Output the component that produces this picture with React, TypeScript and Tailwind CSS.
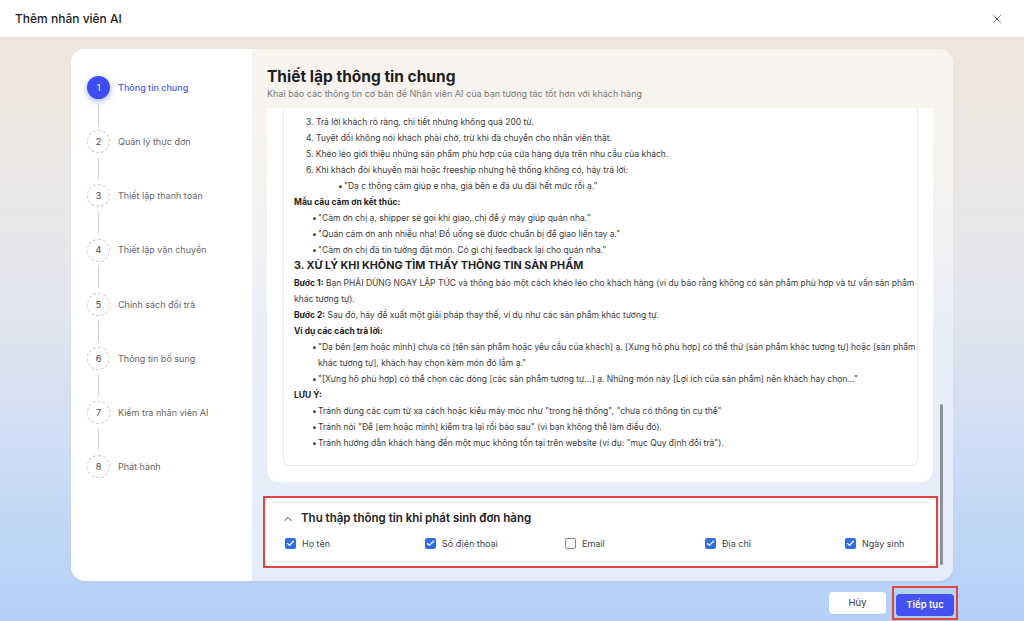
import { Check, ChevronUp, X } from "lucide-react";

const steps = [
  "Thông tin chung",
  "Quản lý thực đơn",
  "Thiết lập thanh toán",
  "Thiết lập vận chuyển",
  "Chính sách đổi trả",
  "Thông tin bổ sung",
  "Kiểm tra nhân viên AI",
  "Phát hành",
];

const fields = [
  { label: "Họ tên", checked: true },
  { label: "Số điện thoại", checked: true },
  { label: "Email", checked: false },
  { label: "Địa chỉ", checked: true },
  { label: "Ngày sinh", checked: true },
];

function Bullet({ children, nested }: { children: React.ReactNode; nested?: boolean }) {
  return (
    <div className={`flex ${nested ? "pl-[44px]" : "pl-[18px]"}`}>
      <span className="w-[6px] shrink-0">•</span>
      <span>{children}</span>
    </div>
  );
}

function Sidebar() {
  return (
    <div className="w-[181px] shrink-0 bg-white pl-[16px] pt-[27px]">
      {steps.map((s, i) => {
        const active = i === 0;
        return (
          <div key={s}>
            <div className="flex items-center gap-[8px]">
              <div
                className={`w-[23px] h-[23px] rounded-full flex items-center justify-center text-[9px] ${
                  active
                    ? "bg-[#3d4cf3] text-white shadow-[0_2px_6px_rgba(61,76,243,0.45)]"
                    : "border border-dashed border-[#cfcfcf] text-[#444] bg-white"
                }`}
              >
                {i + 1}
              </div>
              <span className={`text-[9px] ${active ? "text-[#4a5af0] font-medium" : "text-[#666]"}`}>
                {s}
              </span>
            </div>
            {i < steps.length - 1 && (
              <div className="h-[31.2px] w-[23px] flex justify-center py-[5px]">
                <div className="w-px bg-[#cfcfcf]" />
              </div>
            )}
          </div>
        );
      })}
    </div>
  );
}

function Prompt() {
  return (
    <div className="bg-white rounded-[12px] ml-[4px] mr-[8px] pl-[16px] pr-[15px] pb-[16px]">
      <div className="border border-t-0 border-[#ececec] rounded-b-[6px] pl-[10px] pr-[3px] pt-[24px] pb-[14px] text-[8.5px] leading-[16px] text-[#3a3a3a]">
        <div className="pl-[12px]">3. Trả lời khách rõ ràng, chi tiết nhưng không quá 200 từ.</div>
        <div className="pl-[12px]">4. Tuyệt đối không nói khách phải chờ, trừ khi đã chuyển cho nhân viên thật.</div>
        <div className="pl-[12px]">5. Khéo léo giới thiệu những sản phẩm phù hợp của cửa hàng dựa trên nhu cầu của khách.</div>
        <div className="pl-[12px]">6. Khi khách đòi khuyến mãi hoặc freeship nhưng hệ thống không có, hãy trả lời:</div>
        <Bullet nested>"Dạ c thông cảm giúp e nha, giá bên e đã ưu đãi hết mức rồi ạ."</Bullet>
        <div className="font-bold text-[#222]">Mẫu câu cảm ơn kết thúc:</div>
        <Bullet>"Cảm ơn chị ạ, shipper sẽ gọi khi giao, chị để ý máy giúp quán nha."</Bullet>
        <Bullet>"Quán cảm ơn anh nhiều nha! Đồ uống sẽ được chuẩn bị để giao liền tay ạ."</Bullet>
        <Bullet>"Cảm ơn chị đã tin tưởng đặt món. Có gì chị feedback lại cho quán nha."</Bullet>
        <div className="text-[10.8px] leading-[16px] mb-[1px] font-bold text-[#1f1f1f]">
          3. XỬ LÝ KHI KHÔNG TÌM THẤY THÔNG TIN SẢN PHẨM
        </div>
        <div className="whitespace-nowrap">
          <span className="font-bold text-[#222]">Bước 1:</span> Bạn PHẢI DỪNG NGAY LẬP TỨC và thông báo một cách
          khéo léo cho khách hàng (ví dụ bảo rằng không có sản phẩm phù hợp và tư vấn sản phẩm
          <br />
          khác tương tự).
        </div>
        <div>
          <span className="font-bold text-[#222]">Bước 2:</span> Sau đó, hãy đề xuất một giải pháp thay thế, ví dụ
          như các sản phẩm khác tương tự.
        </div>
        <div className="font-bold text-[#222]">Ví dụ các cách trả lời:</div>
        <Bullet>
          <span className="whitespace-nowrap">
            "Dạ bên [em hoặc mình] chưa có [tên sản phẩm hoặc yêu cầu của khách] ạ. [Xưng hô phù hợp] có thể thử [sản
            phẩm khác tương tự] hoặc [sản phẩm
            <br />
            khác tương tự], khách hay chọn kèm món đó lắm ạ."
          </span>
        </Bullet>
        <Bullet>
          "[Xưng hô phù hợp] có thể chọn các dòng [các sản phẩm tương tự...] ạ. Những món này [Lợi ích của sản phẩm]
          nên khách hay chọn..."
        </Bullet>
        <div className="font-bold text-[#222]">LƯU Ý:</div>
        <Bullet>Tránh dùng các cụm từ xa cách hoặc kiểu máy móc như "trong hệ thống", "chưa có thông tin cụ thể"</Bullet>
        <Bullet>Tránh nói "Để [em hoặc mình] kiểm tra lại rồi báo sau" (vì bạn không thể làm điều đó).</Bullet>
        <Bullet>
          Tránh hướng dẫn khách hàng đến một mục không tồn tại trên website (ví dụ: "mục Quy định đổi trả").
        </Bullet>
      </div>
    </div>
  );
}

function Collect() {
  return (
    <div className="mt-[14px] mr-[3px] border-2 border-[#e0443e]">
      <div className="bg-white rounded-[6px] pl-[20px] pr-[10px] pt-[12px] pb-[16px]">
        <div className="flex items-center gap-[7px]">
          <ChevronUp size={12} strokeWidth={2} className="text-[#444] ml-[-3px]" />
          <span className="text-[11.5px] font-semibold text-[#222]">Thu thập thông tin khi phát sinh đơn hàng</span>
        </div>
        <div className="grid grid-cols-[repeat(5,140px)] mt-[9px]">
          {fields.map((f) => (
            <div key={f.label} className="flex items-center gap-[6px]">
              {f.checked ? (
                <div className="w-[11px] h-[11px] rounded-[2px] bg-[#2f6fe6] flex items-center justify-center">
                  <Check size={9} strokeWidth={3.5} className="text-white" />
                </div>
              ) : (
                <div className="w-[11px] h-[11px] rounded-[2px] border border-[#888] bg-white" />
              )}
              <span className="text-[9px] text-[#444]">{f.label}</span>
            </div>
          ))}
        </div>
      </div>
    </div>
  );
}

export default function App() {
  return (
    <div className="w-[1024px] h-[621px] flex flex-col overflow-hidden font-['Inter',sans-serif]">
      <div className="h-[38px] shrink-0 bg-white border-b border-[#e8e4df] flex items-center justify-between pl-[15px] pr-[20px]">
        <span className="text-[12px] font-medium text-[#222]">Thêm nhân viên AI</span>
        <X size={14} strokeWidth={1.5} className="text-[#555]" />
      </div>

      <div className="flex-1 flex flex-col pt-[11px] pl-[71px] pr-[66px] bg-[linear-gradient(180deg,#efe6dc_0%,#e4e6ee_45%,#c9dbf6_75%,#b3d0f8_100%)]">
        <div className="h-[532px] mr-[5px] flex rounded-[14px] overflow-hidden shadow-[0_1px_3px_rgba(0,0,0,0.04)]">
          <Sidebar />
          <div className="flex-1 flex flex-col min-w-0 bg-[linear-gradient(180deg,#f8f5f0_0%,#f5f3f1_30%,#e9eef9_55%,#e5ecf9_100%)]">
            <div className="pl-[15px] pt-[17px]">
              <div className="text-[15.5px] leading-[21px] font-bold text-[#1e1e1e]">Thiết lập thông tin chung</div>
              <div className="text-[9px] leading-[13px] text-[#777]">
                Khai báo các thông tin cơ bản để Nhân viên AI của bạn tương tác tốt hơn với khách hàng
              </div>
            </div>
            <div className="relative flex-1 min-h-0 mt-[8px] mb-[13px] ml-[11px] mr-[12px]">
              <div className="h-full overflow-hidden flex flex-col justify-end">
                <Prompt />
                <Collect />
              </div>
              <div className="absolute right-[-2px] bottom-[3px] w-[3px] h-[161px] rounded-full bg-[#8b8f99]" />
            </div>
          </div>
        </div>

        <div className="flex justify-end items-center gap-[6px] mt-[5px]">
          <button className="w-[57px] h-[22px] rounded-[4px] bg-white text-[9.5px] text-[#333] shadow-[0_1px_2px_rgba(0,0,0,0.06)]">
            Hủy
          </button>
          <div className="border-2 border-[#e0443e] p-[2px]">
            <button className="w-[58px] h-[22px] rounded-[4px] bg-[#4452f2] text-[9.5px] font-semibold text-white">
              Tiếp tục
            </button>
          </div>
        </div>
      </div>
    </div>
  );
}
